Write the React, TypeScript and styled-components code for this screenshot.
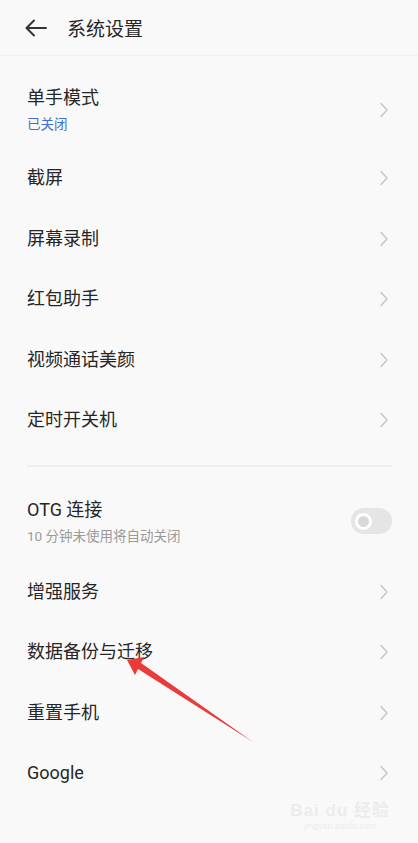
import React from 'react'
import styled, { createGlobalStyle } from 'styled-components'

const GlobalStyle = createGlobalStyle`
  html, body {
    margin: 0;
    padding: 0;
    background: #f9f9f9;
  }
  body {
    font-family: Roboto, "Noto Sans CJK SC", sans-serif;
    color: #222;
  }
`

const Page = styled.div`
  position: relative;
  width: 418px;
  height: 843px;
  overflow: hidden;
  background: #f9f9f9;
`

const Header = styled.div`
  height: 56px;
  display: flex;
  align-items: center;
  padding: 0 0 0 24px;
  gap: 19px;
  border-bottom: 1px solid #f1f1f1;
  box-sizing: border-box;
`

const Title = styled.div`
  font-size: 19px;
  color: #262626;
  margin-top: -1px;
`

const List = styled.div`
  display: flex;
  flex-direction: column;
`

const Row = styled.div<{ $tall?: boolean; $top?: number; $bottom?: number }>`
  display: flex;
  align-items: center;
  justify-content: space-between;
  height: ${p => (p.$tall ? 'auto' : '60.5px')};
  padding: ${p => p.$top || 0}px 27px ${p => p.$bottom || 0}px 27px;
  box-sizing: border-box;
`

const TextCol = styled.div`
  display: flex;
  flex-direction: column;
  gap: 5px;
`

const Label = styled.div`
  font-size: 18px;
  line-height: 24px;
  color: #262626;
`

const Sub = styled.div<{ $blue?: boolean }>`
  font-size: 13.5px;
  line-height: 18px;
  color: ${p => (p.$blue ? '#3d6fd1' : '#9a9a9a')};
`

const Divider = styled.div`
  height: 31px;
  display: flex;
  align-items: center;
  padding: 0 26px 0 27px;
  &::after {
    content: '';
    flex: 1;
    height: 2px;
    background: #f0f0f0;
  }
`

const Toggle = styled.div`
  width: 41px;
  height: 26px;
  border-radius: 13px;
  background: #e5e5e5;
  display: flex;
  align-items: center;
  padding-left: 4px;
  box-sizing: border-box;
  margin-right: -1px;
`

const Knob = styled.div`
  width: 11px;
  height: 11px;
  border-radius: 50%;
  border: 3px solid #fff;
  background: #d9d9d9;
`

const Overlay = styled.svg`
  position: absolute;
  left: 0;
  top: 0;
  pointer-events: none;
`

const Watermark = styled.div`
  position: absolute;
  right: 28px;
  bottom: 12px;
  display: flex;
  flex-direction: column;
  align-items: center;
  color: #ececec;
  font-family: "Liberation Sans", "Noto Sans CJK SC", sans-serif;
`

const WmTop = styled.div`
  font-size: 17px;
  font-weight: bold;
  letter-spacing: 1px;
`

const WmBottom = styled.div`
  font-size: 9px;
`

const Chevron = () => (
  <svg width="10" height="16" viewBox="0 0 10 16" style={{ marginRight: 2 }}>
    <path d="M2 1.5 L8 8 L2 14.5" fill="none" stroke="#c8c8c8" strokeWidth="1.6" strokeLinecap="round" strokeLinejoin="round" />
  </svg>
)

const BackArrow = () => (
  <svg width="24" height="18" viewBox="0 0 24 18">
    <path d="M22 9 H2.5 M10 1.5 L2.5 9 L10 16.5" fill="none" stroke="#333" strokeWidth="2" strokeLinecap="round" strokeLinejoin="round" />
  </svg>
)

const simpleTop = ['截屏', '屏幕录制', '红包助手', '视频通话美颜', '定时开关机']
const simpleBottom = ['增强服务', '数据备份与迁移', '重置手机', 'Google']

export default function App() {
  return (
    <Page>
      <GlobalStyle />
      <Header>
        <BackArrow />
        <Title>系统设置</Title>
      </Header>
      <List>
        <Row $tall $top={30} $bottom={15}>
          <TextCol>
            <Label>单手模式</Label>
            <Sub $blue>已关闭</Sub>
          </TextCol>
          <Chevron />
        </Row>
        {simpleTop.map(t => (
          <Row key={t}>
            <Label>{t}</Label>
            <Chevron />
          </Row>
        ))}
        <Divider />
        <Row $tall $top={16} $bottom={17}>
          <TextCol>
            <Label>OTG 连接</Label>
            <Sub>10 分钟未使用将自动关闭</Sub>
          </TextCol>
          <Toggle>
            <Knob />
          </Toggle>
        </Row>
        {simpleBottom.map(t => (
          <Row key={t}>
            <Label>{t}</Label>
            <Chevron />
          </Row>
        ))}
      </List>
      <Overlay width="418" height="843" viewBox="0 0 418 843">
        <path d="M253 742 L141 663 L144 657 L127 660 L135 675 L138 669 Z" fill="#ea3b3b" />
      </Overlay>
      <Watermark>
        <WmTop>Bai du 经验</WmTop>
        <WmBottom>jingyan.baidu.com</WmBottom>
      </Watermark>
    </Page>
  )
}
